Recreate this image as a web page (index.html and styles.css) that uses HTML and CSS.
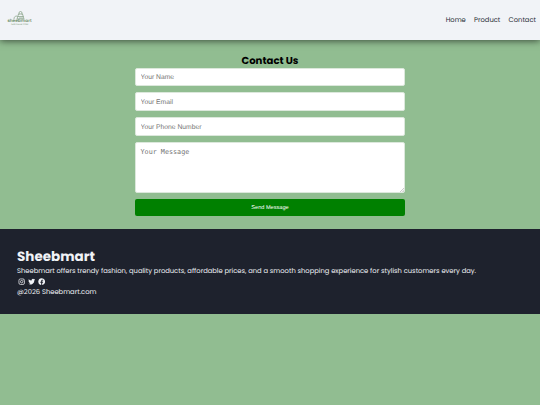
FILE: index.html
```
<!DOCTYPE html>
<html lang="en">
<head>
  <meta charset="UTF-8" />
  <meta name="viewport" content="width=device-width, initial-scale=1.0"/>
  <title>Sheebmart - Contact</title>
  <link rel="stylesheet" href="styles.css">
</head>
<body>
  <header>
    <a class="logo" href="#">
      <svg class="logo-bag" viewBox="0 0 14 9">
        <path d="M5.500 3h4l1.500 5H4zM6 3.500V2a1.500 1.500 0 0 1 3 0v1.500M1 8c0-2 1-3 3-3M4.500 5.500h6M6 7h4"/>
      </svg>
      <span class="logo-name">sheebmart</span>
      <span class="logo-tag">SHOP ONLINE STORE</span>
    </a>
    <nav>
      <a href="#">Home</a>
      <a href="#">Product</a>
      <a href="#">Contact</a>
    </nav>
  </header>

  <main>
    <h2>Contact Us</h2>
    <form>
      <input type="text" placeholder="Your Name">
      <input type="email" placeholder="Your Email">
      <input type="tel" placeholder="Your Phone Number">
      <textarea placeholder="Your Message"></textarea>
      <button type="button">Send Message</button>
    </form>
  </main>

  <footer>
    <h1>Sheebmart</h1>
    <p class="about">Sheebmart offers trendy fashion, quality products, affordable prices, and a smooth shopping experience for stylish customers every day.</p>
    <div class="social">
      <svg viewBox="0 0 24 24">
        <g fill="none" stroke="currentColor" stroke-width="2.400">
          <rect x="3" y="3" width="18" height="18" rx="5"/>
          <circle cx="12" cy="12" r="4"/>
        </g>
        <circle cx="17.300" cy="6.700" r="1.300"/>
      </svg>
      <svg viewBox="0 0 24 24">
        <path d="M23 5.100a9 9 0 0 1-2.600.7 4.500 4.500 0 0 0 2-2.500 9 9 0 0 1-2.900 1.100 4.500 4.500 0 0 0-7.700 4.100A12.800 12.800 0 0 1 2.500 3.800a4.500 4.500 0 0 0 1.400 6 4.500 4.500 0 0 1-2-.5v.1a4.500 4.500 0 0 0 3.600 4.400 4.500 4.500 0 0 1-2 .1 4.500 4.500 0 0 0 4.200 3.100A9 9 0 0 1 1 18.900 12.800 12.800 0 0 0 20.700 7.500 9 9 0 0 0 23 5.100z"/>
      </svg>
      <svg viewBox="0 0 24 24">
        <path d="M23 12A11 11 0 1 0 10.300 22.900v-7.700H7.500V12h2.800V9.600c0-2.800 1.600-4.300 4.100-4.300 1.200 0 2.500.2 2.500.2v2.700h-1.400c-1.400 0-1.800.9-1.800 1.700V12h3.100l-.5 3.200h-2.600v7.700A11 11 0 0 0 23 12z"/>
      </svg>
    </div>
    <p class="copyright">@2026 Sheebmart.com</p>
  </footer>
</body>
</html>
```

FILE: styles.css
```
* {
  margin: 0;
  padding: 0;
  box-sizing: border-box;
}

body {
  font-family: Poppins, Inter, sans-serif;
  font-size: 6.75px;
  text-rendering: geometricPrecision;
  background: #91bd91;
}

header {
  display: flex;
  justify-content: space-between;
  align-items: center;
  height: 40px;
  padding: 0 4px 0 7px;
  background: #f1f3f7;
  box-shadow: 0 1px 7px rgba(0, 0, 0, 0.6);
}

.logo {
  display: flex;
  flex-direction: column;
  align-items: center;
  width: 25px;
  margin-top: -4px;
  color: #71906e;
  text-decoration: none;
}

.logo-bag {
  width: 14px;
  height: 9px;
  margin-bottom: -2px;
  fill: none;
  stroke: #71906e;
  stroke-width: 0.6;
}

.logo-name {
  font-size: 4.3px;
  font-weight: 600;
  line-height: 5px;
}

.logo-tag {
  font-size: 1.8px;
  line-height: 3px;
  white-space: nowrap;
}

nav {
  display: flex;
  gap: 8.3px;
  padding-top: 1px;
}

nav a {
  color: #292d35;
  text-decoration: none;
}

main {
  width: 270px;
  margin: 0 auto;
  padding: 12.5px 0;
}

h2 {
  font-size: 10.1px;
  line-height: 15px;
  text-align: center;
}

form {
  display: flex;
  flex-direction: column;
  gap: 6.3px;
}

input,
textarea {
  width: 100%;
  border: 1px solid #dce8dc;
  border-radius: 2px;
  background: #fff;
  font-size: 6.75px;
  text-rendering: geometricPrecision;
}

input::placeholder,
textarea::placeholder {
  color: #757575;
}

input {
  height: 18.6px;
  padding: 5px 4.5px 4px;
  font-family: "Liberation Sans", sans-serif;
}

textarea {
  height: 51px;
  padding: 5px 4.5px;
  resize: none;
  background: linear-gradient(135deg, #fff 50%, #ccc 50%, #fff 65%, #ccc 80%) right bottom / 4px 4px no-repeat #fff;
  font-family: "DejaVu Sans Mono", monospace;
}

button {
  height: 16.8px;
  padding-top: 1px;
  border: none;
  border-radius: 2px;
  background: green;
  color: #fff;
  font-family: "Liberation Sans", sans-serif;
  font-size: 5.6px;
  text-rendering: geometricPrecision;
}

footer {
  height: 85.5px;
  padding: 17.8px 17px 0;
  background: #1e222d;
  color: #f1f3f7;
}

footer h1 {
  font-size: 13.5px;
  line-height: 20.4px;
}

footer p {
  line-height: 10.7px;
}

.social {
  display: flex;
  gap: 2.8px;
  height: 10.5px;
  padding: 0 0 3px 0.5px;
  align-items: center;
}

.social svg {
  width: 7.4px;
  height: 7.4px;
  fill: currentColor;
}
```
